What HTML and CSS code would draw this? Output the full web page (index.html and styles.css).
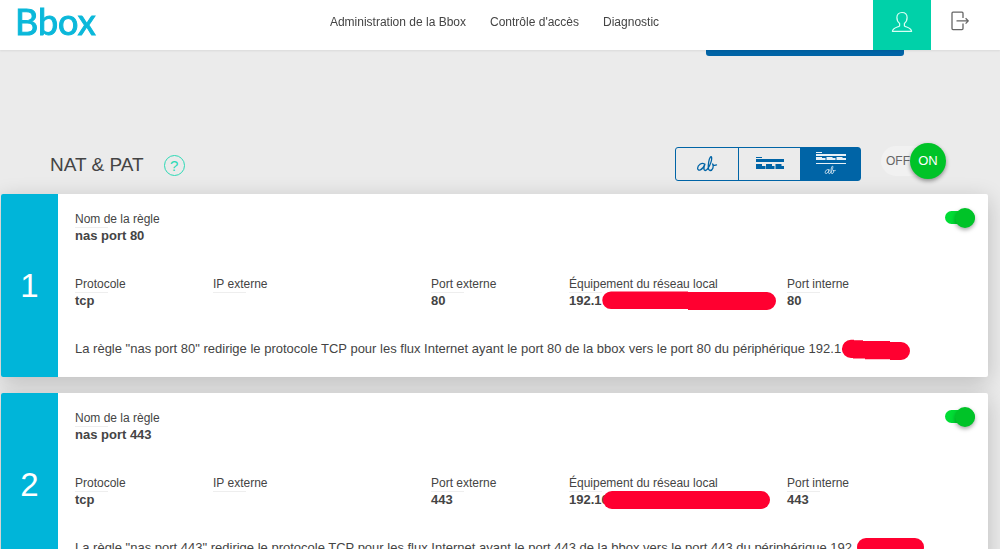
FILE: index.html
```html
<!DOCTYPE html>
<html lang="fr">
<head>
<meta charset="utf-8">
<meta name="viewport" content="width=device-width, initial-scale=1">
<title>Bbox - NAT &amp; PAT</title>
<link rel="stylesheet" href="styles.css">
</head>
<body>
<header class="topbar">
  <a class="logo" href="#">Bbox</a>
  <nav class="nav">
    <a href="#">Administration de la Bbox</a>
    <a href="#">Contrôle d'accès</a>
    <a href="#">Diagnostic</a>
  </nav>
  <div class="actions">
    <button class="action action-user" type="button" aria-label="Compte">
      <svg width="22" height="22" viewBox="0 0 22 22" fill="none" stroke="currentColor" stroke-width="1.2" stroke-linejoin="round"><path d="M8.6 12.4C6.9 11.2 5.9 9 5.9 6.6 5.9 3.500 7.900 1.500 11 1.500S16.100 3.500 16.100 6.600C16.100 9 15.100 11.200 13.400 12.400V14.800C14.500 16.300 20 16 20.600 20.300H1.400C2 16 7.500 16.300 8.600 14.800Z"/></svg>
    </button>
    <button class="action" type="button" aria-label="Déconnexion">
      <svg width="20" height="20" viewBox="0 0 20 20" fill="none" stroke="currentColor" stroke-width="1.3" stroke-linejoin="round"><path d="M13 7V2.200Q13 1.200 12 1.200H3Q2 1.200 2 2.200V17.600Q2 18.600 3 18.600H12Q13 18.600 13 17.600V12.600M6.500 9.900H18.200M15.600 7.200 18.300 9.900 15.600 12.600"/></svg>
    </button>
  </div>
</header>
<main class="page">
  <div class="page-action"><button class="primary" type="button" aria-label="Ajouter une règle"></button></div>
  <section class="heading">
    <h1>NAT &amp; PAT</h1>
    <button class="help" type="button" aria-label="Aide">?</button>
    <div class="views">
      <button class="view" type="button" aria-label="Vue phrase">
        <svg width="22" height="20" viewBox="0 0 22 20" fill="none" stroke="currentColor" stroke-width="1.3" stroke-linecap="round" stroke-linejoin="round"><path d="M8.600 10C5.500 8.200 1.800 11 1.600 14.300 1.600 17.600 6.500 16.500 8.900 10.200 7.600 13.500 7.600 16.600 9.200 16.500 12 16.300 16.300 7 15.600 3.500 15.200 1.300 13.300 4 12.700 8 11.900 12.500 11.900 16.300 14 16.500 16.800 16.600 18 12.600 16.600 10 17.200 11.500 19 11.500 20.500 10.900"/></svg>
      </button>
      <button class="view" type="button" aria-label="Vue champs">
        <svg width="30" height="14" viewBox="0 0 30 14" fill="currentColor"><path d="M1 0h6v1H1zM1 2h28v3H1zM1 7h6v2h3.500v1H1zM11 7h6v2h2.500v1H11zM20.500 7h6v2H29v1h-8.500zM1 10h9.500v2H1zM11 10h8.500v2H11zM20.500 10H29v2h-8.500z"/></svg>
      </button>
      <button class="view view-active" type="button" aria-label="Vue complète">
        <svg width="30" height="26" viewBox="0 0 30 26" fill="currentColor"><path d="M0 1h6v1H0zM0 3h30v2H0zM0 6h6v1H0zM10.500 6h6v1h-6zM20.500 6h6v1h-6zM0 7h9.500v2H0zM10.500 7h9v2h-9zM20.500 7H30v2h-9.500zM0 12h30v1H0z"/><path d="M13 18.600C11 17.700 9.200 19.800 9.200 21.500 9.200 23.400 11.800 22.800 13.200 18.800 12.400 21 12.400 22.600 13.300 22.600 15 22.500 17.200 17.300 16.800 15.500 16.500 14.400 15.500 15.800 15.200 18 14.800 20.400 14.800 22.500 16 22.600 17.500 22.600 18.100 20.300 17.300 19 17.700 19.800 18.500 19.800 19.300 19.500" fill="none" stroke="currentColor" stroke-width=".8" stroke-linecap="round"/></svg>
      </button>
    </div>
    <label class="power"><input type="checkbox" role="switch" aria-label="NAT et PAT" checked><span class="power-off">OFF</span><span class="power-on">ON</span></label>
  </section>
  <article class="rule">
    <div class="rule-number">1</div>
    <div class="rule-body">
      <div class="rule-top">
        <dl class="field"><dt>Nom de la règle</dt><dd>nas port 80</dd></dl>
        <input class="switch" type="checkbox" role="switch" aria-label="Activer nas port 80" checked>
      </div>
      <div class="fields">
        <dl class="field"><dt>Protocole</dt><dd>tcp</dd></dl>
        <dl class="field"><dt>IP externe</dt><dd></dd></dl>
        <dl class="field"><dt>Port externe</dt><dd>80</dd></dl>
        <dl class="field"><dt>Équipement du réseau local</dt><dd>192.1<span class="redact"><svg class="redact-ink" width="176" height="20" viewBox="0 0 176 20"><path d="M9 .5H86V1H165A9 9 0 0 1 165 19H86V18H9A8.750 8.750 0 0 1 9 .5Z"/></svg></span></dd></dl>
        <dl class="field"><dt>Port interne</dt><dd>80</dd></dl>
      </div>
      <p class="sentence">La règle "nas port 80" redirige le protocole TCP pour les flux Internet ayant le port 80 de la bbox vers le port 80 du périphérique 192.1<span class="redact"><svg class="redact-ink" width="70" height="22" viewBox="0 0 70 22"><path d="M10 .8H13V1.200H22V2H49V3H60A9 9 0 0 1 60 21H49V20.300H24V19.500H12V19H10A9 9 0 0 1 10 .8Z"/></svg></span></p>
    </div>
  </article>
  <article class="rule">
    <div class="rule-number">2</div>
    <div class="rule-body">
      <div class="rule-top">
        <dl class="field"><dt>Nom de la règle</dt><dd>nas port 443</dd></dl>
        <input class="switch" type="checkbox" role="switch" aria-label="Activer nas port 443" checked>
      </div>
      <div class="fields">
        <dl class="field"><dt>Protocole</dt><dd>tcp</dd></dl>
        <dl class="field"><dt>IP externe</dt><dd></dd></dl>
        <dl class="field"><dt>Port externe</dt><dd>443</dd></dl>
        <dl class="field"><dt>Équipement du réseau local</dt><dd>192.1<span class="redact">6<svg class="redact-ink" width="168" height="20" viewBox="0 0 168 20"><rect x="1" y="1" width="167" height="18" rx="9"/></svg></span></dd></dl>
        <dl class="field"><dt>Port interne</dt><dd>443</dd></dl>
      </div>
      <p class="sentence">La règle "nas port 443" redirige le protocole TCP pour les flux Internet ayant le port 443 de la bbox vers le port 443 du périphérique 192.<span class="redact"><svg class="redact-ink" width="70" height="20" viewBox="0 0 70 20"><rect x="1" y="0" width="67" height="18" rx="9"/></svg></span></p>
    </div>
  </article>
</main>
</body>
</html>
```
FILE: styles.css
```css
* { box-sizing: border-box; }

body {
  margin: 0;
  height: 100vh;
  overflow: hidden;
  background: #ebebeb;
  color: #444;
  font-family: "Liberation Sans", Arial, sans-serif;
  font-size: 13px;
}

button {
  margin: 0;
  padding: 0;
  border: 0;
  background: none;
  color: inherit;
  font: inherit;
  cursor: pointer;
}

svg { display: block; }

.topbar {
  position: fixed;
  top: 0;
  left: 0;
  right: 0;
  z-index: 2;
  display: grid;
  grid-template-columns: 1fr auto 1fr;
  height: 50px;
  padding-right: 11px;
  background: #fff;
  box-shadow: 0 1px 2px rgba(0, 0, 0, .08);
}

.logo {
  align-self: start;
  padding-left: 15px;
  color: #0bb8da;
  font-family: Lato, sans-serif;
  font-size: 36px;
  line-height: 42px;
  text-decoration: none;
  -webkit-text-stroke: 1px #0bb8da;
}

.nav {
  display: flex;
  gap: 24px;
  font-size: 12px;
  line-height: 44px;
}

.nav a { color: #444; text-decoration: none; }

.actions { display: flex; justify-content: flex-end; }

.action {
  display: flex;
  justify-content: center;
  width: 58px;
  height: 50px;
  padding-top: 11px;
  color: #666;
}

.action-user { background: #00d1a9; color: #d9fff5; }

.page { padding: 20px 12px 0 1px; }

.page-action {
  display: flex;
  justify-content: flex-end;
  padding-right: 84px;
}

.primary {
  width: 198px;
  height: 36px;
  border-radius: 3px;
  background: #0064a6;
}

.heading {
  display: flex;
  align-items: center;
  height: 36px;
  margin: 87px 42px 15px 49px;
}

.heading h1 {
  margin: 0;
  padding-top: 8px;
  font-size: 19px;
  font-weight: 400;
  line-height: 22px;
}

.help {
  width: 21px;
  height: 21px;
  margin: 9px auto 0 20px;
  border: 1px solid #2bd9b5;
  border-radius: 50%;
  color: #2bd9b5;
  font-size: 15px;
  line-height: 19px;
}

.views {
  display: flex;
  height: 34px;
  margin: 6px 20px 0 0;
  border: 1px solid #0064a6;
  border-radius: 3px;
}

.view {
  display: flex;
  align-items: center;
  justify-content: center;
  width: 62px;
  color: #0064a6;
}

.view + .view { border-left: 1px solid #0064a6; }

.view-active { width: 60px; background: #0064a6; color: #e8f1f7; }

.power {
  display: flex;
  align-items: center;
  height: 30px;
  padding-left: 5px;
  border-radius: 15px;
  background: #f1f1f1;
  color: #666;
}

.power input {
  position: absolute;
  opacity: 0;
}

.power-off { font-size: 12px; }

.power-on {
  width: 36px;
  height: 36px;
  border-radius: 50%;
  background: #00c328;
  box-shadow: 0 2px 4px rgba(0, 0, 0, .4);
  color: #fff;
  line-height: 36px;
  text-align: center;
}

.rule {
  display: flex;
  margin-bottom: 16px;
  border-radius: 2px;
  background: #fff;
  box-shadow: 0 5px 22px rgba(0, 0, 0, .2);
}

.rule-number {
  display: flex;
  align-items: center;
  justify-content: center;
  width: 57px;
  border-radius: 2px 0 0 2px;
  background: #00b5d9;
  color: #fff;
  font-size: 33px;
}

.rule-body {
  flex: 1;
  min-width: 0;
  padding: 17px 0 18px 17px;
}

.rule-top {
  display: flex;
  justify-content: space-between;
  align-items: flex-start;
  height: 65px;
  padding-right: 13px;
}

.fields {
  display: grid;
  grid-template-columns: 138fr 218fr 138fr 218fr 201fr;
}

.field { margin: 0; white-space: nowrap; }

.field dt {
  font-size: 12px;
  line-height: 16px;
}

.field dt::after {
  content: "";
  display: block;
  width: 33px;
  height: 1px;
  background: #eee;
}

.field dd {
  min-height: 16px;
  margin: 0;
  font-weight: 700;
  line-height: 16px;
}

.sentence {
  margin: 30px 0 0;
  line-height: 20px;
  white-space: nowrap;
}

.redact { position: relative; }

.redact-ink {
  position: absolute;
  top: -2px;
  left: 0;
  fill: #ff0030;
}

.switch {
  appearance: none;
  display: flex;
  justify-content: flex-end;
  align-items: center;
  width: 30px;
  height: 13px;
  margin: 0;
  border-radius: 7px;
  background: #00dc34;
}

.switch::before {
  content: "";
  width: 20px;
  height: 20px;
  flex-shrink: 0;
  border-radius: 50%;
  background: #00c328;
  box-shadow: 0 2px 4px rgba(0, 0, 0, .35);
}
```
